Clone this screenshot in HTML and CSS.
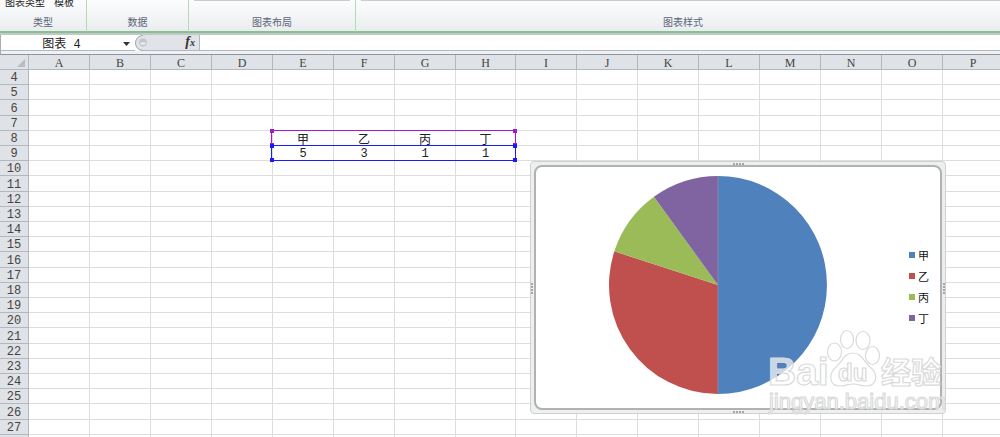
FILE: index.html
```html
<!DOCTYPE html>
<html lang="zh-CN">
<head>
<meta charset="utf-8">
<title>图表 4</title>
<link rel="stylesheet" href="styles.css">
</head>
<body>
<header class="ribbon">
  <section class="group group-type">
    <div class="commands"><button type="button">图表类型</button><button type="button">模板</button></div>
    <h2>类型</h2>
  </section>
  <section class="group group-data"><h2>数据</h2></section>
  <section class="group group-layout"><div class="gallery"></div><h2>图表布局</h2></section>
  <section class="group group-style"><div class="gallery"></div><h2>图表样式</h2></section>
</header>
<div class="formula-bar">
  <input class="name-box" type="text" value="图表 4" aria-label="名称框">
  <button class="drop" type="button" aria-label="名称列表"><svg width="7" height="4" viewBox="0 0 7 4"><path d="M0 0H7L3.500 4Z" fill="#333"/></svg></button>
  <div class="functions">
    <svg width="14" height="16" viewBox="0 0 14 16" aria-hidden="true"><path d="M0 0H8A7.500 7.500 0 0 0 8 16H0Z" fill="#fff"/><path d="M8 .5A7.500 7.500 0 0 0 8 15.500" fill="none" stroke="#a4a8ac"/><circle cx="8" cy="7.500" r="4" fill="#c3c7cc"/><path d="M5.500 8.500H10.500" stroke="#f0f2f4" stroke-width="2"/></svg>
    <button class="fx" type="button" aria-label="插入函数">f<span>x</span></button>
  </div>
  <input class="formula" type="text" aria-label="编辑栏">
</div>
<main class="sheet">
  <table>
    <colgroup><col class="col-head"><col><col><col><col><col><col><col><col class="col-h"><col><col><col><col><col><col><col><col></colgroup>
    <thead><tr><th class="corner"><svg width="8" height="8" viewBox="0 0 8 8"><path d="M8 0V8H0Z" fill="#b9bdc2"/></svg></th><th>A</th><th>B</th><th>C</th><th>D</th><th>E</th><th>F</th><th>G</th><th>H</th><th>I</th><th>J</th><th>K</th><th>L</th><th>M</th><th>N</th><th>O</th><th>P</th></tr></thead>
    <tbody id="rows"></tbody>
  </table>
  <div class="range names"><i></i><i></i><i></i><i></i></div>
  <div class="range values"><i></i><i></i><i></i><i></i></div>
  <figure class="chart">
    <span class="grip top"></span><span class="grip bottom"></span><span class="grip side left"></span><span class="grip side right"></span>
    <div class="plot">
      <svg class="pie" width="220" height="220" viewBox="-110 -110 220 220" role="img" aria-label="饼图">
        <path d="M0 0V-109A109 109 0 0 1 0 109Z" fill="#4f81bd"/>
        <path d="M0 0V109A109 109 0 0 1 -103.660 -33.680Z" fill="#c0504d"/>
        <path d="M0 0L-103.660 -33.680A109 109 0 0 1 -64.070 -88.180Z" fill="#9bbb59"/>
        <path d="M0 0L-64.070 -88.180A109 109 0 0 1 0 -109Z" fill="#8064a2"/>
        <path d="M0 -109V109" stroke="#8b86a8"/>
      </svg>
      <ul class="legend"><li class="blue">甲</li><li class="red">乙</li><li class="green">丙</li><li class="purple">丁</li></ul>
    </div>
  </figure>
  <svg class="watermark" width="190" height="90" viewBox="0 0 190 90">
    <g fill="#fff" fill-opacity=".7" stroke="#dadada" stroke-width="1.200">
      <text class="wm-bold" x="6" y="57" font-size="39">Bai</text>
      <ellipse cx="72.500" cy="24" rx="7" ry="9"/><ellipse cx="85" cy="11.500" rx="6.500" ry="9"/><ellipse cx="101" cy="12.500" rx="7" ry="9"/><ellipse cx="110.500" cy="27.500" rx="7" ry="9"/>
      <path d="M91 25C100 25 102 34 108 39C117 46 115 58 104 58C98 58 96 56 91 56C86 56 84 58 78 58C67 58 66 46 74 39C80 34 82 25 91 25Z"/>
      <text class="wm-bold" x="76" y="53" font-size="24">du</text>
      <text class="wm-cjk" x="119" y="55" font-size="30">经验</text>
      <text class="wm-url" x="7" y="81" font-size="22">jingyan.baidu.com</text>
    </g>
  </svg>
</main>
<script src="sheet.js"></script>
</body>
</html>
```
FILE: styles.css
```css
* { box-sizing: border-box; }
body {
  margin: 0;
  height: 100vh;
  overflow: hidden;
  display: flex;
  flex-direction: column;
  background: #fff;
  color: #222;
  font: 12px "Liberation Mono", "Noto Sans CJK SC", monospace;
}
button, input { font: inherit; color: inherit; border: 0; padding: 0; margin: 0; background: none; }
h2, ul, figure { margin: 0; padding: 0; }

.ribbon {
  flex: none;
  display: flex;
  height: 35px;
  overflow: hidden;
  background: linear-gradient(#fdfdfd, #eaedf0 31px);
  border-bottom: 2px solid #c1c7cb;
}
.group {
  display: flex;
  flex-direction: column;
  justify-content: flex-end;
  border-right: 1px solid #afdcb3;
  border-bottom: 2px solid #86c08a;
}
.group-type { width: 87px; }
.group-data { width: 102px; }
.group-layout { width: 167px; }
.group-style { flex: 1; border-right: 0; }
.group-style h2 { padding-left: 10px; }
.group h2 {
  font: 10px/18px "Noto Sans CJK SC", sans-serif;
  color: #5c667a;
  text-align: center;
}
.commands { display: flex; gap: 9px; padding-left: 5px; margin-bottom: 3px; }
.commands button { font: 10px/16px "Noto Sans CJK SC", sans-serif; white-space: nowrap; }
.gallery { height: 1px; margin: 0 5px 12px; background: #c9cdd1; }
.group-style .gallery { margin-right: 0; }

.formula-bar {
  flex: none;
  display: flex;
  height: 20px;
  padding-bottom: 4px;
  background: linear-gradient(#b4b8be 1px, #eef1f5 1px) 0 100% / 100% 4px no-repeat;
  border-bottom: 1px solid #8f949b;
  border-left: 1px solid #a9adb2;
}
.name-box { width: 121px; height: 15px; text-align: center; }
.drop { width: 13px; display: flex; align-items: center; padding-top: 2px; padding-left: 1px; }
.functions { display: flex; justify-content: space-between; align-items: center; width: 65px; padding-right: 4px; background: #e0e3e7; border-right: 1px solid #b4b8be; }
.fx { font: italic bold 14px/14px "Liberation Serif", serif; color: #333; }
.fx span { font-size: 10px; }
.formula { flex: 1; min-width: 0; }

.sheet { position: relative; flex: 1; overflow: hidden; }
table { table-layout: fixed; width: 1003px; border-collapse: separate; border-spacing: 0; }
col { width: 61px; }
.col-head { width: 29px; }
.col-h { width: 60px; }
th, td { padding: 3px 0 0; height: 15px; line-height: 11px; text-align: center; font-weight: normal; }
td { border-right: 1px solid #dcdddf; border-bottom: 1px solid #dcdddf; }
td.text { padding-top: 1px; line-height: 13px; font-family: "Noto Sans CJK SC", sans-serif; }
th { background: #dfe2e6; border-right: 1px solid #b4b8be; border-bottom: 1px solid #b4b8be; color: #444; }
thead th { font-family: "Liberation Serif", serif; }
th.corner { text-align: right; padding-right: 3px; }
.corner svg { display: inline-block; }
tbody tr:nth-child(5n+3) > * { height: 16px; }

.range { position: absolute; left: 271px; width: 245px; height: 16px; border: 1px solid; display: grid; grid-template-columns: 1fr 1fr; justify-content: space-between; align-content: space-between; }
.range i { width: 4px; height: 4px; margin: -2px; background: currentColor; }
.range i:nth-child(even) { justify-self: end; }
.names { top: 75px; color: #a31bc9; border-color: #a31bc9; }
.values { top: 90px; color: #1a1aff; border-color: #1a1aff; }

.chart {
  position: absolute;
  left: 530px;
  top: 106px;
  width: 416px;
  height: 253px;
  padding: 3px;
  border: 1px solid #cfd1d1;
  border-radius: 4px;
  background: #ecedede0;
}
.plot { height: 100%; display: flex; align-items: center; background: #fff; border: 2px solid #b0b1b2; border-radius: 8px; padding-left: 72px; }
.pie { flex: none; margin-bottom: 6px; }
.legend { list-style: none; margin-left: 81px; margin-bottom: 2px; font: 11px/21px "Noto Sans CJK SC", sans-serif; color: #111; }
.legend li { display: flex; align-items: center; gap: 3px; }
.legend li::before { content: ""; width: 6px; height: 6px; background: currentColor; }
.legend .blue::before { color: #4f81bd; }
.legend .red::before { color: #c0504d; }
.legend .green::before { color: #9bbb59; }
.legend .purple::before { color: #8064a2; }
.grip { position: absolute; width: 12px; height: 2px; left: 202px; background: repeating-linear-gradient(90deg, #a5a6a7 0 2px, transparent 2px 3px); }
.top { top: 1px; }
.bottom { bottom: 0; }
.side { width: 2px; height: 12px; top: 121px; background: repeating-linear-gradient(#a5a6a7 0 2px, transparent 2px 3px); }
.left { left: 0; }
.right { left: auto; right: 0; }

.watermark { position: absolute; left: 762px; top: 273px; }
.wm-bold { font-family: "Liberation Sans", Arial, sans-serif; font-weight: bold; }
.wm-cjk { font-family: "Noto Sans CJK SC", sans-serif; font-weight: bold; }
.wm-url { font-family: "Liberation Sans", Arial, sans-serif; }
```
FILE: sheet.js
```js
const columns = "ABCDEFGHIJKLMNOP";
const values = {
  E8: "甲", F8: "乙", G8: "丙", H8: "丁",
  E9: "5", F9: "3", G9: "1", H9: "1"
};
const body = document.getElementById("rows");
for (let row = 4; row <= 28; row++) {
  const tr = body.insertRow();
  const head = document.createElement("th");
  head.textContent = row < 28 ? row : "";
  tr.append(head);
  for (const column of columns) {
    const cell = tr.insertCell();
    cell.textContent = values[column + row] || "";
    if (row === 8) cell.className = "text";
  }
}
```
